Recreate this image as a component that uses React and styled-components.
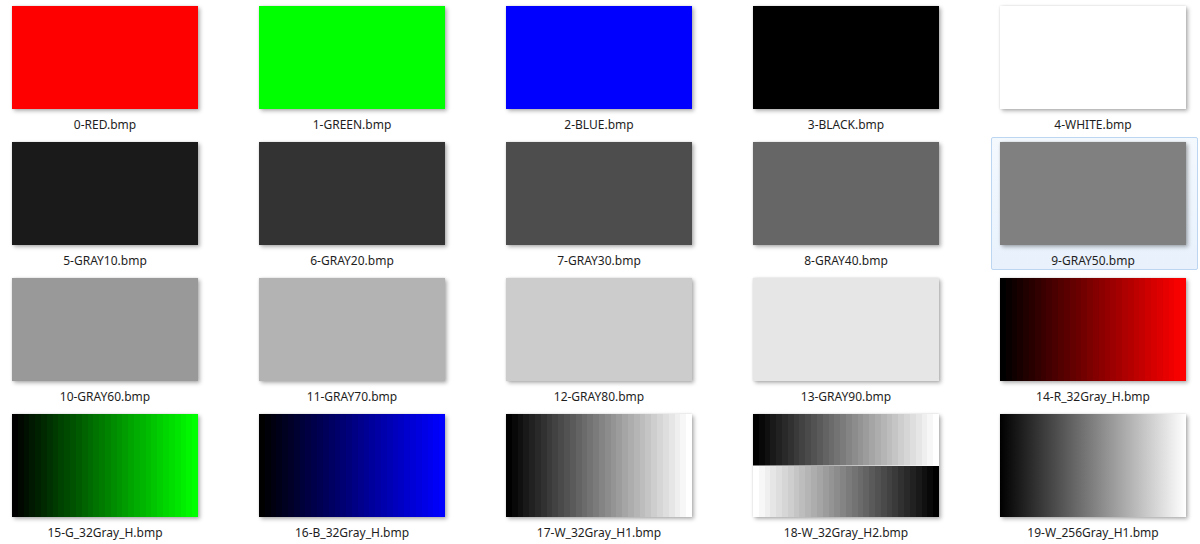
import styled, { createGlobalStyle } from "styled-components";

const GlobalStyle = createGlobalStyle`
  html, body {
    margin: 0;
    padding: 0;
    background: #ffffff;
  }
`;

const Grid = styled.div`
  display: grid;
  grid-template-columns: repeat(5, 207px);
  grid-auto-rows: 133px;
  column-gap: 40px;
  row-gap: 3px;
  padding: 1px 3px 0;
  font-family: "Noto Sans", "Open Sans", sans-serif;
`;

const Cell = styled.div`
  box-sizing: border-box;
  display: flex;
  flex-direction: column;
  align-items: center;
  padding: 5px 9px 0;
  border: 1px solid ${(p) => (p.$selected ? "#bcd6f1" : "transparent")};
  border-radius: 2px;
  background: ${(p) =>
    p.$selected ? "linear-gradient(to bottom, #f4f9fe, #e8f1fc)" : "transparent"};
  padding-top: 4px;
  padding-left: 8px;
  align-items: flex-start;
`;

const Thumb = styled.div`
  width: 186px;
  height: 104px;
  background: ${(p) => p.$bg};
  box-shadow: 0 0 2px rgba(0, 0, 0, 0.12), 2px 2px 4px rgba(0, 0, 0, 0.3);
`;

const Label = styled.div`
  width: 186px;
  margin-top: 8px;
  font-size: 12px;
  line-height: 16px;
  color: #1e1e1e;
  text-align: center;
  white-space: nowrap;
`;

// hard-stop gradient with n flat bands
const steps = (from, to, n, dir = "to right") => {
  const stops = [];
  for (let i = 0; i < n; i++) {
    const t = i / (n - 1);
    const c = from.map((f, k) => Math.round(f + (to[k] - f) * t));
    const col = `rgb(${c.join(",")})`;
    stops.push(`${col} ${(i * 100) / n}%`, `${col} ${((i + 1) * 100) / n}%`);
  }
  return `linear-gradient(${dir}, ${stops.join(", ")})`;
};

const K = [0, 0, 0];
const W = [255, 255, 255];

const half = (a, b) =>
  `${steps(a, b, 32)} top / 100% 50% no-repeat, ${steps(b, a, 32)} bottom / 100% 50% no-repeat`;

const items = [
  ["0-RED.bmp", "#ff0000"],
  ["1-GREEN.bmp", "#00ff00"],
  ["2-BLUE.bmp", "#0000ff"],
  ["3-BLACK.bmp", "#000000"],
  ["4-WHITE.bmp", "#ffffff"],
  ["5-GRAY10.bmp", "#1a1a1a"],
  ["6-GRAY20.bmp", "#333333"],
  ["7-GRAY30.bmp", "#4d4d4d"],
  ["8-GRAY40.bmp", "#666666"],
  ["9-GRAY50.bmp", "#808080", true],
  ["10-GRAY60.bmp", "#999999"],
  ["11-GRAY70.bmp", "#b3b3b3"],
  ["12-GRAY80.bmp", "#cccccc"],
  ["13-GRAY90.bmp", "#e6e6e6"],
  ["14-R_32Gray_H.bmp", steps(K, [255, 0, 0], 32)],
  ["15-G_32Gray_H.bmp", steps(K, [0, 255, 0], 32)],
  ["16-B_32Gray_H.bmp", steps(K, [0, 0, 255], 32)],
  ["17-W_32Gray_H1.bmp", steps(K, W, 32)],
  ["18-W_32Gray_H2.bmp", half(K, W)],
  ["19-W_256Gray_H1.bmp", "linear-gradient(to right, #000000, #ffffff)"],
];

export default function App() {
  return (
    <>
      <GlobalStyle />
      <Grid>
        {items.map(([name, bg, selected]) => (
          <Cell key={name} $selected={selected}>
            <Thumb $bg={bg} />
            <Label>{name}</Label>
          </Cell>
        ))}
      </Grid>
    </>
  );
}
